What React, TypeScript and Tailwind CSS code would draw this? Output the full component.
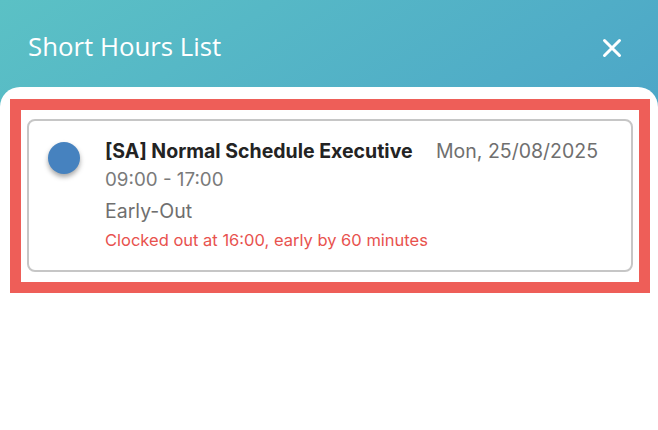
import React from "react";

export default function App() {
  return (
    <div
      className="w-[658px] h-[430px] flex flex-col bg-gradient-to-br from-[#5bc1c5] to-[#4596c8] overflow-hidden"
      style={{ fontFamily: "Inter, 'Noto Sans', sans-serif" }}
    >
      <div className="h-[87px] shrink-0 flex items-center justify-between pl-[28px] pr-[36px] pb-[1px]">
        <span className="text-white text-[25.8px] leading-[30px] font-normal mt-[5px]" style={{ fontFamily: "'Open Sans', sans-serif" }}>Short Hours List</span>
        <svg width="20" height="20" viewBox="0 0 20 20" className="mt-[9px]">
          <path d="M2.5 2.5 L17.5 17.5 M17.5 2.5 L2.5 17.5" stroke="white" strokeWidth="3" strokeLinecap="round" />
        </svg>
      </div>
      <div className="flex-1 bg-white rounded-t-[20px] pt-[12px] pl-[10px] pr-[8px]">
        <div className="border-[11px] border-[#ee5e58] pl-[6px] pr-[6px] pt-[9px] pb-[10px]">
          <div className="h-[153px] border-2 border-[#c6c6c6] rounded-[8px] flex pl-[19px] pt-[17px] pr-[33px]">
            <div className="w-[32px] h-[32px] mt-[4px] rounded-full bg-[#4682bf] shadow-[0_3px_5px_rgba(0,0,0,0.35)] shrink-0" />
            <div className="flex-1 ml-[25px]">
              <div className="flex justify-between h-[28px] items-center">
                <span className="text-[19.5px] font-bold text-[#232323]">[SA] Normal Schedule Executive</span>
                <span className="text-[19.5px] text-[#6f6f6f]">Mon, 25/08/2025</span>
              </div>
              <div className="text-[18.8px] leading-[28px] text-[#7a7a7a]">09:00 - 17:00</div>
              <div className="text-[19.5px] leading-[34px] text-[#6f6f6f]">Early-Out</div>
              <div className="text-[16.5px] leading-[24px] text-[#e8524e]">Clocked out at 16:00, early by 60 minutes</div>
            </div>
          </div>
        </div>
      </div>
    </div>
  );
}
